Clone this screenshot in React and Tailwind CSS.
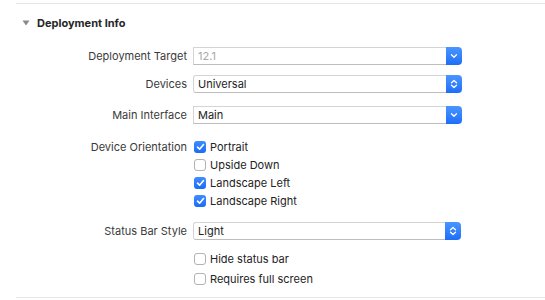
import React from "react";

function Chevron({ updown }) {
  return updown ? (
    <svg width="8" height="10" viewBox="0 0 8 10" fill="none">
      <path d="M1.5 3.8 L4 1.5 L6.5 3.8" stroke="white" strokeWidth="1.3" strokeLinecap="round" strokeLinejoin="round" />
      <path d="M1.5 6.2 L4 8.5 L6.5 6.2" stroke="white" strokeWidth="1.3" strokeLinecap="round" strokeLinejoin="round" />
    </svg>
  ) : (
    <svg width="8" height="6" viewBox="0 0 8 6" fill="none">
      <path d="M1.5 1.8 L4 4.3 L6.5 1.8" stroke="white" strokeWidth="1.3" strokeLinecap="round" strokeLinejoin="round" />
    </svg>
  );
}

function Field({ value, disabled, popup, width = "w-[269px]" }) {
  return (
    <div className={`flex h-[18px] ${width}`}>
      <div
        className={`flex-1 flex items-center bg-white border border-[#d4d4d4] border-b-[#bdbdbd] border-r-0 pl-[4px] ${
          popup ? "rounded-l-[3px]" : ""
        } ${disabled ? "text-[#a8a8a8]" : "text-[#232323]"}`}
      >
        {value}
      </div>
      <div className="w-[16px] h-[18px] rounded-r-[4px] bg-gradient-to-b from-[#4b95ff] to-[#1c6ef8] flex items-center justify-center">
        <Chevron updown={popup} />
      </div>
    </div>
  );
}

function Check({ checked, label }) {
  return (
    <div className="flex items-center h-[18px]">
      {checked ? (
        <div className="w-[12px] h-[12px] rounded-[3px] bg-gradient-to-b from-[#3f8cff] to-[#1b6cf6] flex items-center justify-center">
          <svg width="9" height="8" viewBox="0 0 9 8" fill="none">
            <path d="M1.5 4.2 L3.6 6.2 L7.5 1.6" stroke="white" strokeWidth="1.6" strokeLinecap="round" strokeLinejoin="round" />
          </svg>
        </div>
      ) : (
        <div className="w-[12px] h-[12px] rounded-[3px] bg-white border border-[#b3b3b3]" />
      )}
      <span className="ml-[4px] text-[#232323]">{label}</span>
    </div>
  );
}

function Row({ label, children, className = "" }) {
  return (
    <div className={`flex items-center ${className}`}>
      <div className="w-[187px] text-right text-[#3a3a3a] shrink-0">{label}</div>
      <div className="ml-[6px]">{children}</div>
    </div>
  );
}

export default function App() {
  return (
    <div
      className="w-[545px] h-[300px] bg-white relative overflow-hidden text-[11px] leading-none"
      style={{ fontFamily: "Inter, 'Liberation Sans', sans-serif" }}
    >
      <div className="ml-[16px] mt-[3px] h-px bg-[#e6e6e6]" />
      <div className="flex items-center h-[14px] mt-[12px] ml-[22px]">
        <svg width="8" height="6" viewBox="0 0 8 6">
          <path d="M0.5 0.5 L7.5 0.5 L4 5.5 Z" fill="#8a8a8a" />
        </svg>
        <span className="ml-[7px] font-bold text-[#262626]">Deployment Info</span>
      </div>
      <div className="mt-[17px]">
        <Row label="Deployment Target">
          <Field value="12.1" disabled />
        </Row>
        <Row label="Devices" className="mt-[10px]">
          <Field value="Universal" popup />
        </Row>
        <Row label="Main Interface" className="mt-[13px]">
          <Field value="Main" />
        </Row>
        <div className="flex mt-[14px]">
          <div className="w-[187px] text-right text-[#3a3a3a] shrink-0 h-[18px] flex items-center justify-end">
            Device Orientation
          </div>
          <div className="ml-[6px] pl-[1px] flex flex-col">
            <Check checked label="Portrait" />
            <Check label="Upside Down" />
            <Check checked label="Landscape Left" />
            <Check checked label="Landscape Right" />
          </div>
        </div>
        <Row label="Status Bar Style" className="mt-[12px]">
          <Field value="Light" popup width="w-[268px]" />
        </Row>
        <div className="ml-[194px] mt-[10px] flex flex-col">
          <Check label="Hide status bar" />
          <div className="mt-[2px]">
            <Check label="Requires full screen" />
          </div>
        </div>
      </div>
      <div className="absolute left-[16px] right-0 top-[297px] h-px bg-[#e6e6e6]" />
    </div>
  );
}
